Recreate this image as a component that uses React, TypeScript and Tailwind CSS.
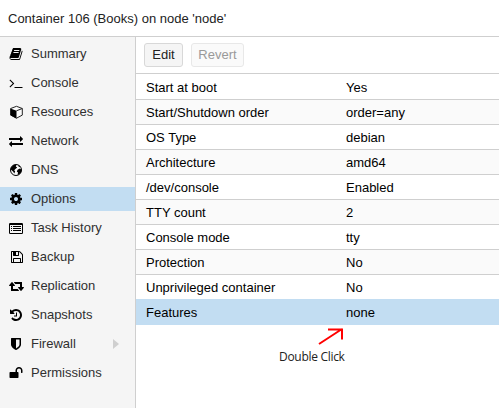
import type { ReactNode } from "react";

function Glyph({ d, w = 1792, size = "w-[14px]" }: { d: string; w?: number; size?: string }) {
  return (
    <svg viewBox={`0 0 ${w} 1792`} className={`h-[14px] ${size}`} fill="currentColor">
      <path d={d} />
    </svg>
  );
}

const book =
  "M1703 478q40 57 18 129l-275 906q-19 64-76.500 107.500t-122.500 43.500h-923q-77 0-148.500-53.500t-99.500-131.500q-24-67-2-127 0-4 3-27t4-37q1-8-3-21.500t-3-19.500q2-11 8-21t16.500-23.500 16.500-23.500q23-38 45-91.500t30-91.500q3-10 .5-30t-.5-28q3-11 17-28t17-23q21-36 42-92t25-90q1-9-2.500-32t.5-28q4-13 22-30.500t22-22.500q19-26 42.500-84.500t27.500-96.500q1-8-3-25.500t-2-26.500q2-8 9-18t18-23 17-21q8-12 16.500-30.500t15-35 16-36 19.500-32 26.500-23.500 36-11.500 47.500 5.500l-1 3q38-9 51-9h761q74 0 114 56t18 130l-274 906q-36 119-71.500 153.500t-128.500 34.500h-869q-27 0-38 15-11 16-1 43 24 70 144 70h923q29 0 56-15.500t35-41.500l300-987q7-22 5-57 38 15 59 43zm-1064 2q-4 13 2 22.500t20 9.500h608q13 0 25.500-9.500t16.500-22.500l21-64q4-13-2-22.500t-20-9.500h-608q-13 0-25.500 9.500t-16.500 22.500zm-83 256q-4 13 2 22.500t20 9.500h608q13 0 25.500-9.500t16.500-22.500l21-64q4-13-2-22.500t-20-9.500h-608q-13 0-25.500 9.500t-16.500 22.500z";
const terminal =
  "M649 983l-466 466q-10 10-23 10t-23-10l-50-50q-10-10-10-23t10-23l393-393-393-393q-10-10-10-23t10-23l50-50q10-10 23-10t23 10l466 466q10 10 10 23t-10 23zm1079 457v64q0 14-9 23t-23 9h-960q-14 0-23-9t-9-23v-64q0-14 9-23t23-9h960q14 0 23 9t9 23z";
const exchange =
  "M1792 1184v192q0 13-9.500 22.500t-22.500 9.500h-1376v192q0 13-9.500 22.500t-22.500 9.500q-12 0-24-10l-319-320q-9-9-9-22 0-14 9-23l320-320q9-9 23-9 13 0 22.500 9.500t9.500 22.500v192h1376q13 0 22.500 9.500t9.500 22.500zm0-544q0 14-9 23l-320 320q-9 9-23 9-13 0-22.500-9.500t-9.500-22.500v-192h-1376q-13 0-22.500-9.500t-9.500-22.500v-192q0-13 9.500-22.500t22.500-9.500h1376v-192q0-14 9-23t23-9q12 0 24 10l319 319q9 9 9 23z";
const cog =
  "M1152 896q0-106-75-181t-181-75-181 75-75 181 75 181 181 75 181-75 75-181zm512-109v222q0 12-8 23t-20 13l-185 28q-19 54-39 91 35 50 107 138 10 12 10 25t-9 23q-27 37-99 108t-94 71q-12 0-26-9l-138-108q-44 23-91 38-16 136-29 186-7 28-36 28h-222q-14 0-24.500-8.500t-11.500-21.500l-28-184q-49-16-90-37l-141 107q-10 9-25 9-14 0-25-11-126-114-165-168-7-10-7-23 0-12 8-23 15-21 51-66.500t54-70.500q-27-50-41-99l-183-27q-13-2-21-12.500t-8-23.500v-222q0-12 8-23t19-13l186-28q14-46 39-92-40-57-107-138-10-12-10-24 0-10 9-23 26-36 98.500-107.500t94.500-71.500q13 0 26 10l138 107q44-23 91-38 16-136 29-186 7-28 36-28h222q14 0 24.500 8.500t11.500 21.500l28 184q49 16 90 37l142-107q9-9 24-9 13 0 25 10 129 119 165 170 7 8 7 22 0 12-8 23-15 21-51 66.500t-54 70.500q26 50 41 98l183 28q13 2 21 12.500t8 23.500z";
const floppy =
  "M512 1536h768v-384h-768v384zm896 0h128v-896q0-14-10-38.500t-20-34.500l-281-281q-10-10-34-20t-39-10v416q0 40-28 68t-68 28h-576q-40 0-68-28t-28-68v-416h-128v1280h128v-416q0-40 28-68t68-28h832q40 0 68 28t28 68v416zm-384-928v-320q0-13-9.500-22.500t-22.500-9.500h-192q-13 0-22.500 9.500t-9.500 22.500v320q0 13 9.500 22.500t22.500 9.500h192q13 0 22.500-9.500t9.500-22.500zm640 32v928q0 40-28 68t-68 28h-1344q-40 0-68-28t-28-68v-1344q0-40 28-68t68-28h928q40 0 88 20t76 48l280 280q28 28 48 76t20 88z";
const retweet =
  "M1280 1504q0 13-9.500 22.500t-22.500 9.500h-960q-8 0-13.500-2t-9-7-5.500-8-3-11.500-1-11.500v-600h-192q-26 0-45-19t-19-45q0-24 15-41l320-384q19-22 49-22t49 22l320 384q15 17 15 41 0 26-19 45t-45 19h-192v384h576q16 0 25 11l160 192q7 10 7 21zm640-416q0 24-15 41l-320 384q-20 23-49 23t-49-23l-320-384q-15-17-15-41 0-26 19-45t45-19h192v-384h-576q-16 0-25-12l-160-192q-7-9-7-20 0-13 9.500-22.500t22.500-9.500h960q8 0 13.500 2t9 7 5.500 8 3 11.500 1 11.500v600h192q26 0 45 19t19 45z";
const history =
  "M1664 896q0 156-61 298t-164 245-245 164-298 61q-172 0-327-72.500t-264-204.500q-7-10-6.500-22.500t8.500-20.500l137-138q10-9 25-9 16 2 23 12 73 95 179 147t225 52q104 0 198.500-40.500t163.500-109.500 109.500-163.500 40.500-198.500-40.500-198.500-109.500-163.500-163.500-109.500-198.500-40.500q-98 0-188 35.500t-160 101.500l137 138q31 30 14 69-17 40-59 40h-448q-26 0-45-19t-19-45v-448q0-42 40-59 39-17 69 14l130 129q107-101 244.500-156.500t284.500-55.500q156 0 298 61t245 164 164 245 61 298zm-640-288v448q0 14-9 23t-23 9h-320q-14 0-23-9t-9-23v-64q0-14 9-23t23-9h224v-352q0-14 9-23t23-9h64q14 0 23 9t9 23z";
const shield =
  "M1344 960v-640h-448v1137q119-63 213-137 235-184 235-360zm192-768v768q0 86-33.500 170.500t-83 150-118 127.500-126.500 103-121 77.500-89.500 49.500-42.500 20q-12 6-26 6t-26-6q-16-7-42.500-20t-89.500-49.500-121-77.500-126.500-103-118-127.500-83-150-33.500-170.500v-768q0-26 19-45t45-19h1152q26 0 45 19t19 45z";
const unlock =
  "M1728 576v256q0 26-19 45t-45 19h-64q-26 0-45-19t-19-45v-256q0-106-75-181t-181-75-181 75-75 181v192h96q40 0 68 28t28 68v576q0 40-28 68t-68 28h-960q-40 0-68-28t-28-68v-576q0-40 28-68t68-28h672v-192q0-185 131.500-316.500t316.500-131.500 316.500 131.500 131.500 316.500z";

function CubeIcon() {
  return (
    <svg viewBox="0 0 13 14" className="h-[14px] w-[13px]" strokeLinejoin="round">
      <path d="M6.500 1.300L12.300 3.500v6.600L6.500 13.200.7 10.100V3.500z" fill="#fafafa" stroke="#222" strokeWidth="1" />
      <path d="M.5 3.500l6 2.300v7.700l-6-3.200z" fill="#000" />
      <path d="M6.500 5.800l5.800-2.300" stroke="#222" strokeWidth="1" />
    </svg>
  );
}

function GlobeIcon() {
  return (
    <svg viewBox="0 0 12 12" className="h-[12px] w-[12px]">
      <circle cx="6" cy="6" r="5.500" fill="#fafafa" stroke="#000" strokeWidth="1" />
      <path d="M1 3.500L3.500 1 6.500.8 5.800 2.400 7.200 3.600 5.400 5 4.200 6.200 5.200 7.600 4.200 9.500 3.300 7.800.8 5.600z" />
      <path d="M7.600 5.700L9.800 4.600 11.600 5.800 11 8.400 9 10.600 7.600 10.800 8 8.500 6.800 7.400z" />
      <path d="M8 .8L10.400 2.400 9 3.200z" />
    </svg>
  );
}

function ListIcon() {
  return (
    <svg viewBox="0 0 14 14" className="h-[14px] w-[14px]" fill="currentColor">
      <path
        fillRule="evenodd"
        d="M1.2 2h11.600q1.200 0 1.200 1.200v8.600q0 1.200-1.200 1.200h-11.600q-1.200 0-1.200-1.200v-8.600q0-1.200 1.200-1.200zM1 4v8h12v-8z"
      />
      <path d="M2 5h1v1H2zM4 5h8v1H4zM2 7h1v1H2zM4 7h8v1H4zM2 9h1v1H2zM4 9h8v1H4z" />
    </svg>
  );
}

const items: { label: string; icon: ReactNode; active?: boolean; expandable?: boolean }[] = [
  { label: "Summary", icon: <Glyph d={book} /> },
  { label: "Console", icon: <Glyph d={terminal} /> },
  { label: "Resources", icon: <CubeIcon /> },
  { label: "Network", icon: <Glyph d={exchange} /> },
  { label: "DNS", icon: <GlobeIcon /> },
  { label: "Options", icon: <Glyph d={cog} />, active: true },
  { label: "Task History", icon: <ListIcon /> },
  { label: "Backup", icon: <Glyph d={floppy} w={1664} size="w-[13px]" /> },
  { label: "Replication", icon: <Glyph d={retweet} w={1920} size="w-[15px]" /> },
  { label: "Snapshots", icon: <Glyph d={history} /> },
  { label: "Firewall", icon: <Glyph d={shield} />, expandable: true },
  { label: "Permissions", icon: <Glyph d={unlock} /> },
];

const rows = [
  ["Start at boot", "Yes"],
  ["Start/Shutdown order", "order=any"],
  ["OS Type", "debian"],
  ["Architecture", "amd64"],
  ["/dev/console", "Enabled"],
  ["TTY count", "2"],
  ["Console mode", "tty"],
  ["Protection", "No"],
  ["Unprivileged container", "No"],
  ["Features", "none"],
];

function rowStyle(i: number) {
  if (i === rows.length - 1) return "h-[26px] -mt-px border-[#c2ddf2] bg-[#c2ddf2] pt-[3px]";
  if (i === 0) return "h-[26px] border-[#cfcfcf] bg-white pt-[3px]";
  return i % 2 ? "h-[25px] border-[#cfcfcf] bg-[#fafafa] pt-[2px]" : "h-[25px] border-[#cfcfcf] bg-white pt-[2px]";
}

export default function App() {
  return (
    <div className="flex h-[408px] w-[499px] flex-col overflow-hidden bg-white font-['Liberation_Sans',Arial,sans-serif] text-[13px] text-black">
      <header className="flex h-[37px] shrink-0 items-center border-b border-[#cfcfcf] pl-2 pt-[2px] text-[#222]">
        Container 106 (Books) on node &apos;node&apos;
      </header>
      <div className="flex min-h-0 flex-1">
        <nav className="flex w-[136px] shrink-0 flex-col gap-[5px] border-r border-[#cfcfcf] bg-[#f5f5f5] pt-[5px]">
          {items.map((item) => (
            <div
              key={item.label}
              className={`flex h-6 shrink-0 items-center ${item.active ? "bg-[#c2ddf2]" : ""}`}
            >
              <span className="ml-2 flex w-4 shrink-0 justify-center">{item.icon}</span>
              <span className="ml-[7px] flex-1 text-[#303030]">{item.label}</span>
              {item.expandable && (
                <svg viewBox="0 0 6 10" className="mr-4 h-[10px] w-[6px]" fill="#cfcfcf">
                  <path d="M0 0l6 5-6 5z" />
                </svg>
              )}
            </div>
          ))}
        </nav>
        <main className="flex min-w-0 flex-1 flex-col">
          <div className="flex h-[37px] shrink-0 items-center gap-2 border-b border-[#cfcfcf] pl-2">
            <button className="h-6 w-[39px] rounded-[3px] border border-[#d8d8d8] bg-[#f5f5f5] text-[#222]">
              Edit
            </button>
            <button className="h-6 w-[53px] rounded-[3px] border border-[#e8e8e8] bg-[#fafafa] text-[#999]">
              Revert
            </button>
          </div>
          {rows.map(([name, value], i) => (
            <div key={name} className={`flex shrink-0 items-center border-b pl-[10px] ${rowStyle(i)}`}>
              <span className="w-[200px]">{name}</span>
              <span>{value}</span>
            </div>
          ))}
          <div className="ml-[143px] flex flex-col font-['Open_Sans','Noto_Sans',sans-serif] text-[12px] leading-4 text-[#222]">
            <svg viewBox="0 0 28 24" className="ml-[38px] h-[24px] w-[28px]" fill="none" stroke="#ff0000" strokeWidth="2">
              <path d="M2 19L25 4M11 4.500h14v10" />
            </svg>
            <span className="tracking-[-0.3px]">Double Click</span>
          </div>
        </main>
      </div>
    </div>
  );
}
